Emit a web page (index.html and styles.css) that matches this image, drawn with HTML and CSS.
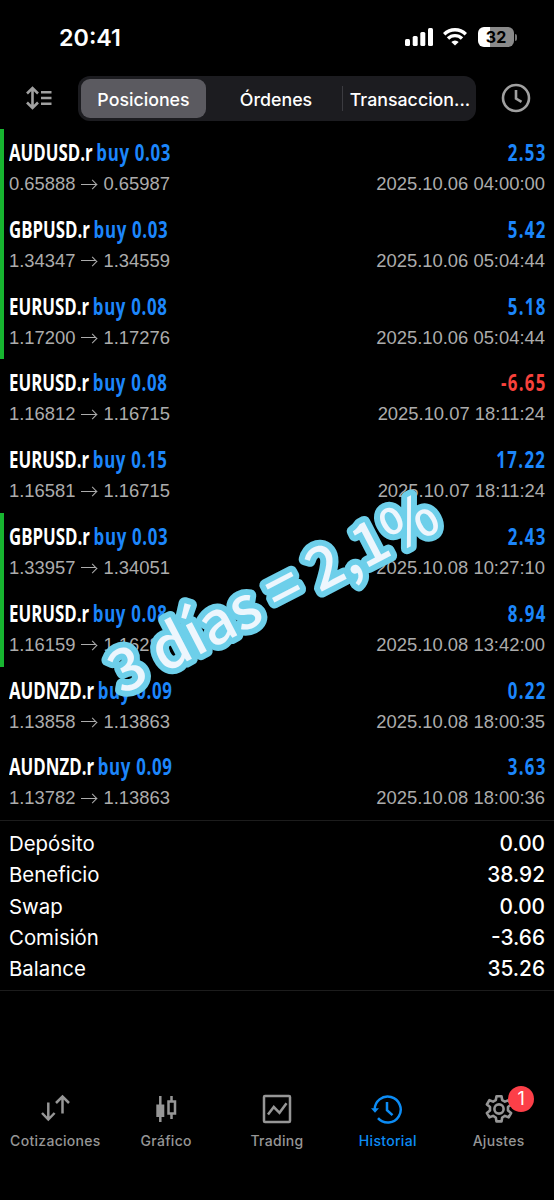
FILE: index.html
```html
<!DOCTYPE html>
<html lang="es">
<head>
  <meta charset="UTF-8" />
  <meta name="viewport" content="width=device-width, initial-scale=1.0"/>
  <title>Historial</title>
  <link rel="stylesheet" href="styles.css">
</head>
<body>
  <div class="status-bar">
    <span class="time">20:41</span>
    <div class="status-icons">
      <svg class="signal" width="28" height="18" viewBox="0 0 28 18" fill="#fff">
        <rect x="0" y="11" width="5" height="7" rx="1.5"/>
        <rect x="7.7" y="8" width="5" height="10" rx="1.5"/>
        <rect x="15.3" y="4" width="5" height="14" rx="1.5"/>
        <rect x="23" y="0" width="5" height="18" rx="1.5"/>
      </svg>
      <svg class="wifi" width="24" height="18" viewBox="0 0 24 18" fill="none" stroke="#fff" stroke-width="3.4">
        <path d="M1.2 6.2a15.5 15.5 0 0 1 21.6 0"/>
        <path d="M5 10.5a10 10 0 0 1 14 0"/>
        <path d="M12 17.6l-3.7-3.7a5.3 5.3 0 0 1 7.4 0z" fill="#fff" stroke="none"/>
      </svg>
      <div class="battery"><span>32</span></div>
      <i class="battery-tip"></i>
    </div>
  </div>

  <div class="toolbar">
    <svg class="sort" width="26" height="24" viewBox="0 0 26 24" fill="none" stroke="#a0a0a0" stroke-width="2.6">
      <path d="M6.5 2.5v19M1 7.5L6.5 2 12 7.5M1 16.5L6.5 22l5.5-5.5"/>
      <path d="M15 6.3h10.5M15 12h10.5M15 17.7h10.5"/>
    </svg>
    <div class="segmented">
      <div class="segment active">Posiciones</div>
      <div class="segment">Órdenes</div>
      <div class="segment last">Transaccion...</div>
    </div>
    <svg class="clock" width="30" height="30" viewBox="0 0 30 30" fill="none" stroke="#a0a0a0" stroke-width="2.6">
      <circle cx="15" cy="15" r="13"/>
      <path d="M15 7v8.5l5.5 3.4"/>
    </svg>
  </div>

  <!-- Posiciones cerradas -->
  <div class="positions">
    <div class="position win">
      <div class="line"><span class="name">AUDUSD.r <b>buy 0.03</b></span><span class="profit">2.53</span></div>
      <div class="line detail"><span>0.65888<i class="arrow"></i>0.65987</span><span>2025.10.06 04:00:00</span></div>
    </div>
    <div class="position win">
      <div class="line"><span class="name">GBPUSD.r <b>buy 0.03</b></span><span class="profit">5.42</span></div>
      <div class="line detail"><span>1.34347<i class="arrow"></i>1.34559</span><span>2025.10.06 05:04:44</span></div>
    </div>
    <div class="position win">
      <div class="line"><span class="name">EURUSD.r <b>buy 0.08</b></span><span class="profit">5.18</span></div>
      <div class="line detail"><span>1.17200<i class="arrow"></i>1.17276</span><span>2025.10.06 05:04:44</span></div>
    </div>
    <div class="position">
      <div class="line"><span class="name">EURUSD.r <b>buy 0.08</b></span><span class="profit loss">-6.65</span></div>
      <div class="line detail"><span>1.16812<i class="arrow"></i>1.16715</span><span>2025.10.07 18:11:24</span></div>
    </div>
    <div class="position">
      <div class="line"><span class="name">EURUSD.r <b>buy 0.15</b></span><span class="profit">17.22</span></div>
      <div class="line detail"><span>1.16581<i class="arrow"></i>1.16715</span><span>2025.10.07 18:11:24</span></div>
    </div>
    <div class="position win">
      <div class="line"><span class="name">GBPUSD.r <b>buy 0.03</b></span><span class="profit">2.43</span></div>
      <div class="line detail"><span>1.33957<i class="arrow"></i>1.34051</span><span>2025.10.08 10:27:10</span></div>
    </div>
    <div class="position win">
      <div class="line"><span class="name">EURUSD.r <b>buy 0.08</b></span><span class="profit">8.94</span></div>
      <div class="line detail"><span>1.16159<i class="arrow"></i>1.16282</span><span>2025.10.08 13:42:00</span></div>
    </div>
    <div class="position">
      <div class="line"><span class="name">AUDNZD.r <b>buy 0.09</b></span><span class="profit">0.22</span></div>
      <div class="line detail"><span>1.13858<i class="arrow"></i>1.13863</span><span>2025.10.08 18:00:35</span></div>
    </div>
    <div class="position">
      <div class="line"><span class="name">AUDNZD.r <b>buy 0.09</b></span><span class="profit">3.63</span></div>
      <div class="line detail"><span>1.13782<i class="arrow"></i>1.13863</span><span>2025.10.08 18:00:36</span></div>
    </div>
  </div>

  <!-- Resumen -->
  <div class="summary">
    <div class="sum-row"><span>Depósito</span><span class="amount">0.00</span></div>
    <div class="sum-row"><span>Beneficio</span><span class="amount">38.92</span></div>
    <div class="sum-row"><span>Swap</span><span class="amount">0.00</span></div>
    <div class="sum-row"><span>Comisión</span><span class="amount">-3.66</span></div>
    <div class="sum-row"><span>Balance</span><span class="amount">35.26</span></div>
  </div>

  <svg class="sticker" width="554" height="300" viewBox="0 450 554 300">
    <text transform="translate(122 695) rotate(-27.4)" textLength="362" lengthAdjust="spacingAndGlyphs">3 días = 2,1%</text>
  </svg>

  <nav class="tabs">
    <div class="tab">
      <svg width="32" height="32" viewBox="0 0 32 32" fill="none" stroke="currentColor" stroke-width="2.5">
        <path d="M9.3 9.5v17M3 20l6.3 6.5 6.3-6.5M23.5 20.5v-17M17 10l6.5-6.5 6.5 6.5"/>
      </svg>
      <span>Cotizaciones</span>
    </div>
    <div class="tab">
      <svg width="32" height="32" viewBox="0 0 32 32" fill="none" stroke="currentColor" stroke-width="2.5">
        <path d="M10.3 3v26M21.5 3v5M21.5 20v6"/>
        <path d="M6.3 11.5h8V24h-8z" fill="currentColor" stroke="none"/>
        <path d="M18.5 8.5H25v12h-6.5z"/>
      </svg>
      <span>Gráfico</span>
    </div>
    <div class="tab">
      <svg width="32" height="32" viewBox="0 0 32 32" fill="none" stroke="currentColor" stroke-width="2.5">
        <rect x="3" y="3" width="26" height="26" rx="1"/>
        <path d="M7 21.5l5.8-7.5 5.7 5.8 7-9.6"/>
      </svg>
      <span>Trading</span>
    </div>
    <div class="tab current">
      <svg width="32" height="32" viewBox="0 0 32 32" fill="none" stroke="currentColor" stroke-width="2.5">
        <path d="M3.7 17A13 13 0 1 1 7 25.2"/>
        <path d="M0 15.2h8l-4 4.6z" fill="currentColor" stroke="none"/>
        <path d="M16 9v8.2l5.5 5"/>
      </svg>
      <span>Historial</span>
    </div>
    <div class="tab">
      <svg width="32" height="32" viewBox="0 0 32 32" fill="none" stroke="currentColor" stroke-width="2.6" stroke-linejoin="round">
        <path d="M13.5 3.2h5l.7 3.9 2.7 1.5 3.7-1.4 2.5 4.3-3.1 2.5v3.5l3.1 2.5-2.5 4.3-3.7-1.4-2.7 1.6-.7 3.9h-5l-.7-3.900-2.700-1.600-3.700 1.400-2.500-4.300 3.100-2.500V14l-3.100-2.500 2.500-4.300 3.700 1.400 2.700-1.500z"/>
        <circle cx="16" cy="16" r="4.6"/>
      </svg>
      <span>Ajustes</span>
      <em class="badge">1</em>
    </div>
  </nav>
</body>
</html>
```
FILE: styles.css
```css
* {
  box-sizing: border-box;
}

body {
  margin: 0;
  height: 1200px;
  background: #000;
  color: #fff;
  font-family: Inter, "Liberation Sans", sans-serif;
  position: relative;
  display: flex;
  flex-direction: column;
  overflow: hidden;
}

/* barra de estado */
.status-bar {
  height: 74px;
  padding: 0 37px 0 59px;
  display: flex;
  align-items: center;
  justify-content: space-between;
}

.time {
  font-size: 23.3px;
  font-weight: 600;
}

.status-icons {
  display: flex;
  align-items: center;
}

.wifi {
  margin-left: 10px;
}

.battery {
  width: 36px;
  height: 20px;
  margin-left: 11px;
  border-radius: 6px;
  background: linear-gradient(to right, #fff 32%, #8a8a8a 32%);
  color: #000;
  font-size: 16px;
  font-weight: 700;
  line-height: 20px;
  text-align: center;
}

.battery-tip {
  width: 2px;
  height: 7px;
  margin-left: 1px;
  border-radius: 0 3px 3px 0;
  background: #777;
}

/* filtros */
.toolbar {
  height: 55px;
  padding: 0 23px 8px 26px;
  display: flex;
  align-items: center;
}

.segmented {
  width: 398px;
  height: 45px;
  margin: 2px 25px 0 26px;
  padding: 3px;
  border-radius: 12px;
  background: #1c1c20;
  display: flex;
  align-items: center;
}

.segment {
  flex: 1;
  height: 39px;
  line-height: 41px;
  padding-left: 4px;
  text-align: center;
  font-size: 17.8px;
  font-weight: 450;
  white-space: nowrap;
}

.segment.active {
  flex: 0 0 125px;
  padding-left: 0;
  border-radius: 9px;
  background: #5b5a60;
  font-weight: 500;
}

.segment.last {
  flex: 0 0 131px;
  height: 25px;
  line-height: 27px;
  border-left: 1px solid #3b3b40;
}

/* lista */
.position {
  height: 76.8px;
  padding: 8px 9px 0 5px;
  border-left: 4px solid transparent;
}

.position.win {
  border-left-color: #17b530;
}

.line {
  display: flex;
  justify-content: space-between;
  height: 31px;
  line-height: 31px;
  white-space: nowrap;
}

.name,
.profit {
  font-family: "Open Sans", sans-serif;
  font-size: 22.3px;
  font-weight: 700;
  transform: scaleX(0.755);
  transform-origin: left;
}

.name b {
  color: #1c86fb;
  font-weight: 700;
  letter-spacing: 0.9px;
  margin-left: -1px;
}

.profit {
  color: #1c86fb;
  letter-spacing: 1.8px;
  margin-right: -1.4px;
  transform-origin: right;
}

.profit.loss {
  color: #f8423c;
}

.detail {
  font-family: "Liberation Sans", sans-serif;
  font-size: 18.4px;
  color: #acacac;
}

.arrow {
  display: inline-block;
  width: 16px;
  height: 10px;
  margin: 0 6px 1px 6px;
  background: linear-gradient(#acacac, #acacac) 0 4.5px / 15px 1px no-repeat;
  position: relative;
}

.arrow::after {
  content: "";
  position: absolute;
  right: 1px;
  top: 2px;
  width: 6px;
  height: 6px;
  border-top: 1px solid #acacac;
  border-right: 1px solid #acacac;
  transform: rotate(45deg);
}

.summary {
  height: 171px;
  padding: 7px 9px 0;
  border-top: 1px solid #1c1c1c;
  border-bottom: 1px solid #1c1c1c;
}

.sum-row {
  display: flex;
  justify-content: space-between;
  height: 31.3px;
  line-height: 31.3px;
  font-size: 20.4px;
}

.amount {
  font-weight: 450;
  font-size: 20.8px;
}

/* texto sobre la lista */
.sticker {
  position: absolute;
  left: 0;
  top: 450px;
}

.sticker text {
  font-family: "Noto Sans CJK SC", sans-serif;
  font-size: 59px;
  font-weight: 500;
  fill: #edf6fd;
  stroke: #6dcfea;
  stroke-width: 12px;
  stroke-linejoin: round;
  paint-order: stroke;
}

/* menu inferior */
.tabs {
  margin-top: auto;
  height: 107px;
  display: flex;
}

.tab {
  flex: 1;
  position: relative;
  display: flex;
  flex-direction: column;
  align-items: center;
  color: #969696;
  font-size: 14px;
  font-weight: 500;
  letter-spacing: 0.3px;
}

.tab span {
  margin-top: 7px;
}

.tab.current {
  color: #0c8cf5;
}

.tab.current svg {
  margin-left: -1px;
}

.badge {
  position: absolute;
  left: 65px;
  top: -7px;
  width: 26px;
  height: 26px;
  border-radius: 50%;
  background: #fc3f48;
  color: #fff;
  font-size: 18px;
  font-style: normal;
  font-weight: 400;
  letter-spacing: 0;
  line-height: 26px;
  text-align: center;
}
```
